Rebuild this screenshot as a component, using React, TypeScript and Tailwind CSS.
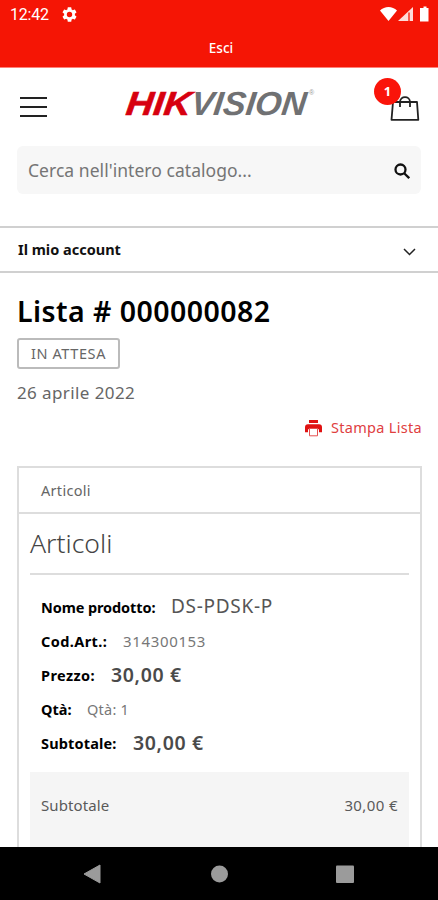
import clsx from 'clsx';

type DetailRow = {
  label: string;
  value: string;
  labelClass: string;
  valueClass: string;
};

const details: DetailRow[] = [
  {
    label: 'Nome prodotto:',
    value: 'DS-PDSK-P',
    labelClass: 'w-[130px] tracking-[-0.1px]',
    valueClass: '-mt-px text-[19px] tracking-[0.7px] text-[#555]',
  },
  {
    label: 'Cod.Art.:',
    value: '314300153',
    labelClass: 'w-[82px] tracking-[0.4px]',
    valueClass: 'text-[15px] tracking-[0.65px] text-[#777]',
  },
  {
    label: 'Prezzo:',
    value: '30,00 €',
    labelClass: 'w-[70px] tracking-[0.4px]',
    valueClass: '-mt-[2px] text-[19.5px] tracking-[0.65px] font-semibold text-[#4a4a4a]',
  },
  {
    label: 'Qtà:',
    value: 'Qtà: 1',
    labelClass: 'w-[46px]',
    valueClass: 'text-[14.5px] tracking-[0.25px] text-[#777]',
  },
  {
    label: 'Subtotale:',
    value: '30,00 €',
    labelClass: 'w-[92px] tracking-[0.15px]',
    valueClass: '-mt-[2px] text-[19.5px] tracking-[0.65px] font-semibold text-[#4a4a4a]',
  },
];

function StatusBar() {
  return (
    <div className="h-[68px] shrink-0 border-b border-[#ff8078] bg-[#f51505] text-white">
      <div className="flex h-[29px] items-center justify-between pl-[10px] pr-[8px]">
        <div className="flex items-center gap-[13px]">
          <span className="font-[Roboto] text-[16px] tracking-[-0.2px] leading-none">12:42</span>
          <svg className="h-[15px] w-[15px]" viewBox="2 2 20 20" fill="currentColor">
            <path d="M19.14 12.94c.04-.3.06-.61.06-.94s-.02-.64-.07-.94l2.03-1.58a.49.49 0 0 0 .12-.61l-1.92-3.32a.49.49 0 0 0-.59-.22l-2.39.96a7 7 0 0 0-1.62-.94l-.36-2.54a.48.48 0 0 0-.48-.41h-3.84a.48.48 0 0 0-.47.41l-.36 2.54c-.59.24-1.13.57-1.62.94l-2.39-.96a.49.49 0 0 0-.59.22L2.74 8.87a.48.48 0 0 0 .12.61l2.03 1.58a7 7 0 0 0 0 1.88l-2.03 1.58a.49.49 0 0 0-.12.61l1.92 3.32c.12.22.37.29.59.22l2.39-.96c.5.38 1.03.7 1.62.94l.36 2.54c.05.24.24.41.48.41h3.84c.24 0 .44-.17.47-.41l.36-2.54a7 7 0 0 0 1.62-.94l2.39.96c.22.08.47 0 .59-.22l1.92-3.32a.48.48 0 0 0-.12-.61zM12 15.6A3.6 3.6 0 1 1 12 8.4a3.6 3.6 0 0 1 0 7.2z" />
          </svg>
        </div>
        <svg className="-mt-px h-[16px] w-[50px]" viewBox="0 0 50 16" fill="currentColor">
          <path d="M0 4.5C4.5-.2 12.5-.2 17 4.5L8.5 15z" />
          <path d="M33 1v14H18z" opacity=".85" />
          <path d="M28 6.5h2V15h-2z" fill="#f51505" opacity=".65" />
          <path d="M42 2h1.500V.5h3V2h2v13.500H40V2z" />
        </svg>
      </div>
      <div className="flex h-[38px] items-center justify-center pl-1 pt-px text-[13.5px] font-medium leading-none">Esci</div>
    </div>
  );
}

function Header() {
  return (
    <header className="flex h-[78px] shrink-0 items-center justify-between pl-[20px] pr-[17px]">
      <div className="flex w-[27px] flex-col gap-[7px]">
        <span className="h-[2px] bg-[#222]" />
        <span className="h-[2px] bg-[#222]" />
        <span className="h-[2px] bg-[#222]" />
      </div>
      <svg
        className="-mt-2 ml-[21px] h-[40px] w-[192px]"
        viewBox="0 0 192 40"
        fontFamily="Liberation Sans, Arial, sans-serif"
        fontStyle="italic"
        fontWeight="700"
      >
        <g transform="translate(0 31.500) skewX(-7)">
          <text fontSize="33.500" fill="#d7000f" stroke="#d7000f" strokeWidth=".6" textLength="65" lengthAdjust="spacingAndGlyphs">
            HIK
          </text>
          <text x="65" fontSize="33.500" fill="#707173" textLength="115" lengthAdjust="spacingAndGlyphs">
            VISION
          </text>
        </g>
        <text x="184" y="12" fontSize="7" fontStyle="normal" fontWeight="400" fill="#999">
          ®
        </text>
      </svg>
      <div className="relative h-[54px] w-[47px]">
        <svg className="absolute left-[16px] top-[14px] h-[30px] w-[30px]" viewBox="0 0 30 30" fill="none" stroke="#222" strokeWidth="1.800">
          <path d="M3 8h24l1.300 17.800H1.500z" strokeLinejoin="round" />
          <path d="M10 13V8c0-6.500 10-6.500 10 0v5" />
        </svg>
        <span className="absolute left-0 top-[-2px] flex h-[27px] w-[27px] items-center justify-center rounded-full bg-[#fa140a] text-[13px] font-bold text-white">
          1
        </span>
      </div>
    </header>
  );
}

function SearchBar() {
  return (
    <div className="mx-[17px] flex h-[48px] shrink-0 items-center justify-between rounded-md bg-[#f7f7f7] pl-[11px] pr-[11px]">
      <span className="text-[17.5px] tracking-[0.04px] text-[#757575]">Cerca nell'intero catalogo...</span>
      <svg className="mt-px h-4 w-4" viewBox="0 0 16 16" fill="none" stroke="#111" strokeWidth="2.300">
        <circle cx="6.500" cy="6.500" r="5" />
        <path d="M10.200 10.200l5 5" />
      </svg>
    </div>
  );
}

function PrintLink() {
  return (
    <div className="mt-[12px] flex h-[22px] items-center justify-end gap-2 text-[#e0403f]">
      <svg className="h-[18px] w-[19px]" viewBox="0 0 19 18">
        <path d="M5 1h9v3H5z" fill="#e01212" />
        <path d="M4 5.200h11a3 3 0 0 1 3 3v5h-3v-3H4v3H1v-5a3 3 0 0 1 3-3z" fill="#e01212" />
        <path d="M5.500 9.500h8v7.300h-8z" fill="#fff" stroke="#e55050" />
      </svg>
      <span className="text-[14.5px] tracking-[0.3px]">Stampa Lista</span>
    </div>
  );
}

function OrderPanel() {
  return (
    <section className="ml-[17px] mr-[16px] mt-[27px] h-[420px] border-2 border-[#ddd]">
      <div className="flex h-[46px] items-center border-b-2 border-[#ddd] pl-[22px] pt-px text-[14.5px] tracking-[0.3px] text-[#666]">
        Articoli
      </div>
      <div className="px-[11px]">
        <h2 className="flex h-[61px] items-center border-b-2 border-[#ddd] text-[26.5px] font-light text-[#444]">
          Articoli
        </h2>
        <dl className="pl-[11px] pt-[15px]">
          {details.map((row) => (
            <div key={row.label} className="flex h-[34.2px] items-center whitespace-nowrap">
              <dt className={clsx('shrink-0 pt-px text-[14.5px] font-bold text-black', row.labelClass)}>{row.label}</dt>
              <dd className={row.valueClass}>{row.value}</dd>
            </div>
          ))}
        </dl>
        <div className="mt-[11px] h-[140px] bg-[#f5f5f5] px-[11px] pt-[21px] text-[15px] leading-[24px] text-[#5a5a5a]">
          <div className="flex justify-between">
            <span className="tracking-[0.1px]">Subtotale</span>
            <span className="tracking-[0.4px]">30,00 €</span>
          </div>
          <div className="mt-[23px]">Spedizione e gestione</div>
        </div>
      </div>
    </section>
  );
}

function NavigationBar() {
  return (
    <nav className="h-[53px] shrink-0 bg-black">
      <svg className="h-full w-full" viewBox="0 0 438 53" fill="#9b9b9b">
        <path d="M84 27l16-9v18z" stroke="#9b9b9b" strokeLinejoin="round" />
        <circle cx="219.500" cy="27" r="8.500" />
        <rect x="336" y="18.500" width="18" height="17.500" rx="1" />
      </svg>
    </nav>
  );
}

export default function App() {
  return (
    <div className="flex h-[900px] w-[438px] flex-col overflow-hidden bg-white font-['Noto_Sans','Open_Sans',sans-serif]">
      <StatusBar />
      <main className="flex min-h-0 flex-1 flex-col overflow-hidden">
        <Header />
        <SearchBar />
        <div className="mt-[32px] flex h-[47px] shrink-0 items-center justify-between border-y-2 border-[#d0d0d0] pl-[18px] pr-[22px]">
          <span className="text-[14.5px] font-bold text-[#111]">Il mio account</span>
          <svg className="mt-1 h-2 w-[13px]" viewBox="0 0 13 8" fill="none" stroke="#222" strokeWidth="1.500">
            <path d="M1 1l5.500 5.500L12 1" />
          </svg>
        </div>
        <div className="shrink-0 pl-[17px] pr-[16px]">
          <h1 className="mt-[19px] h-[38px] whitespace-nowrap text-[28.5px] font-semibold leading-[38px] tracking-[0.45px] text-black">
            Lista # 000000082
          </h1>
          <div className="mt-[8px] flex h-[31px] w-[103px] items-center justify-center rounded-[3px] border-2 border-[#bbb] text-[14.5px] tracking-[0.6px] text-[#666]">
            IN ATTESA
          </div>
          <div className="mt-[12px] h-[24px] text-[17px] leading-[24px] tracking-[0.4px] text-[#666]">26 aprile 2022</div>
          <PrintLink />
        </div>
        <OrderPanel />
      </main>
      <NavigationBar />
    </div>
  );
}
